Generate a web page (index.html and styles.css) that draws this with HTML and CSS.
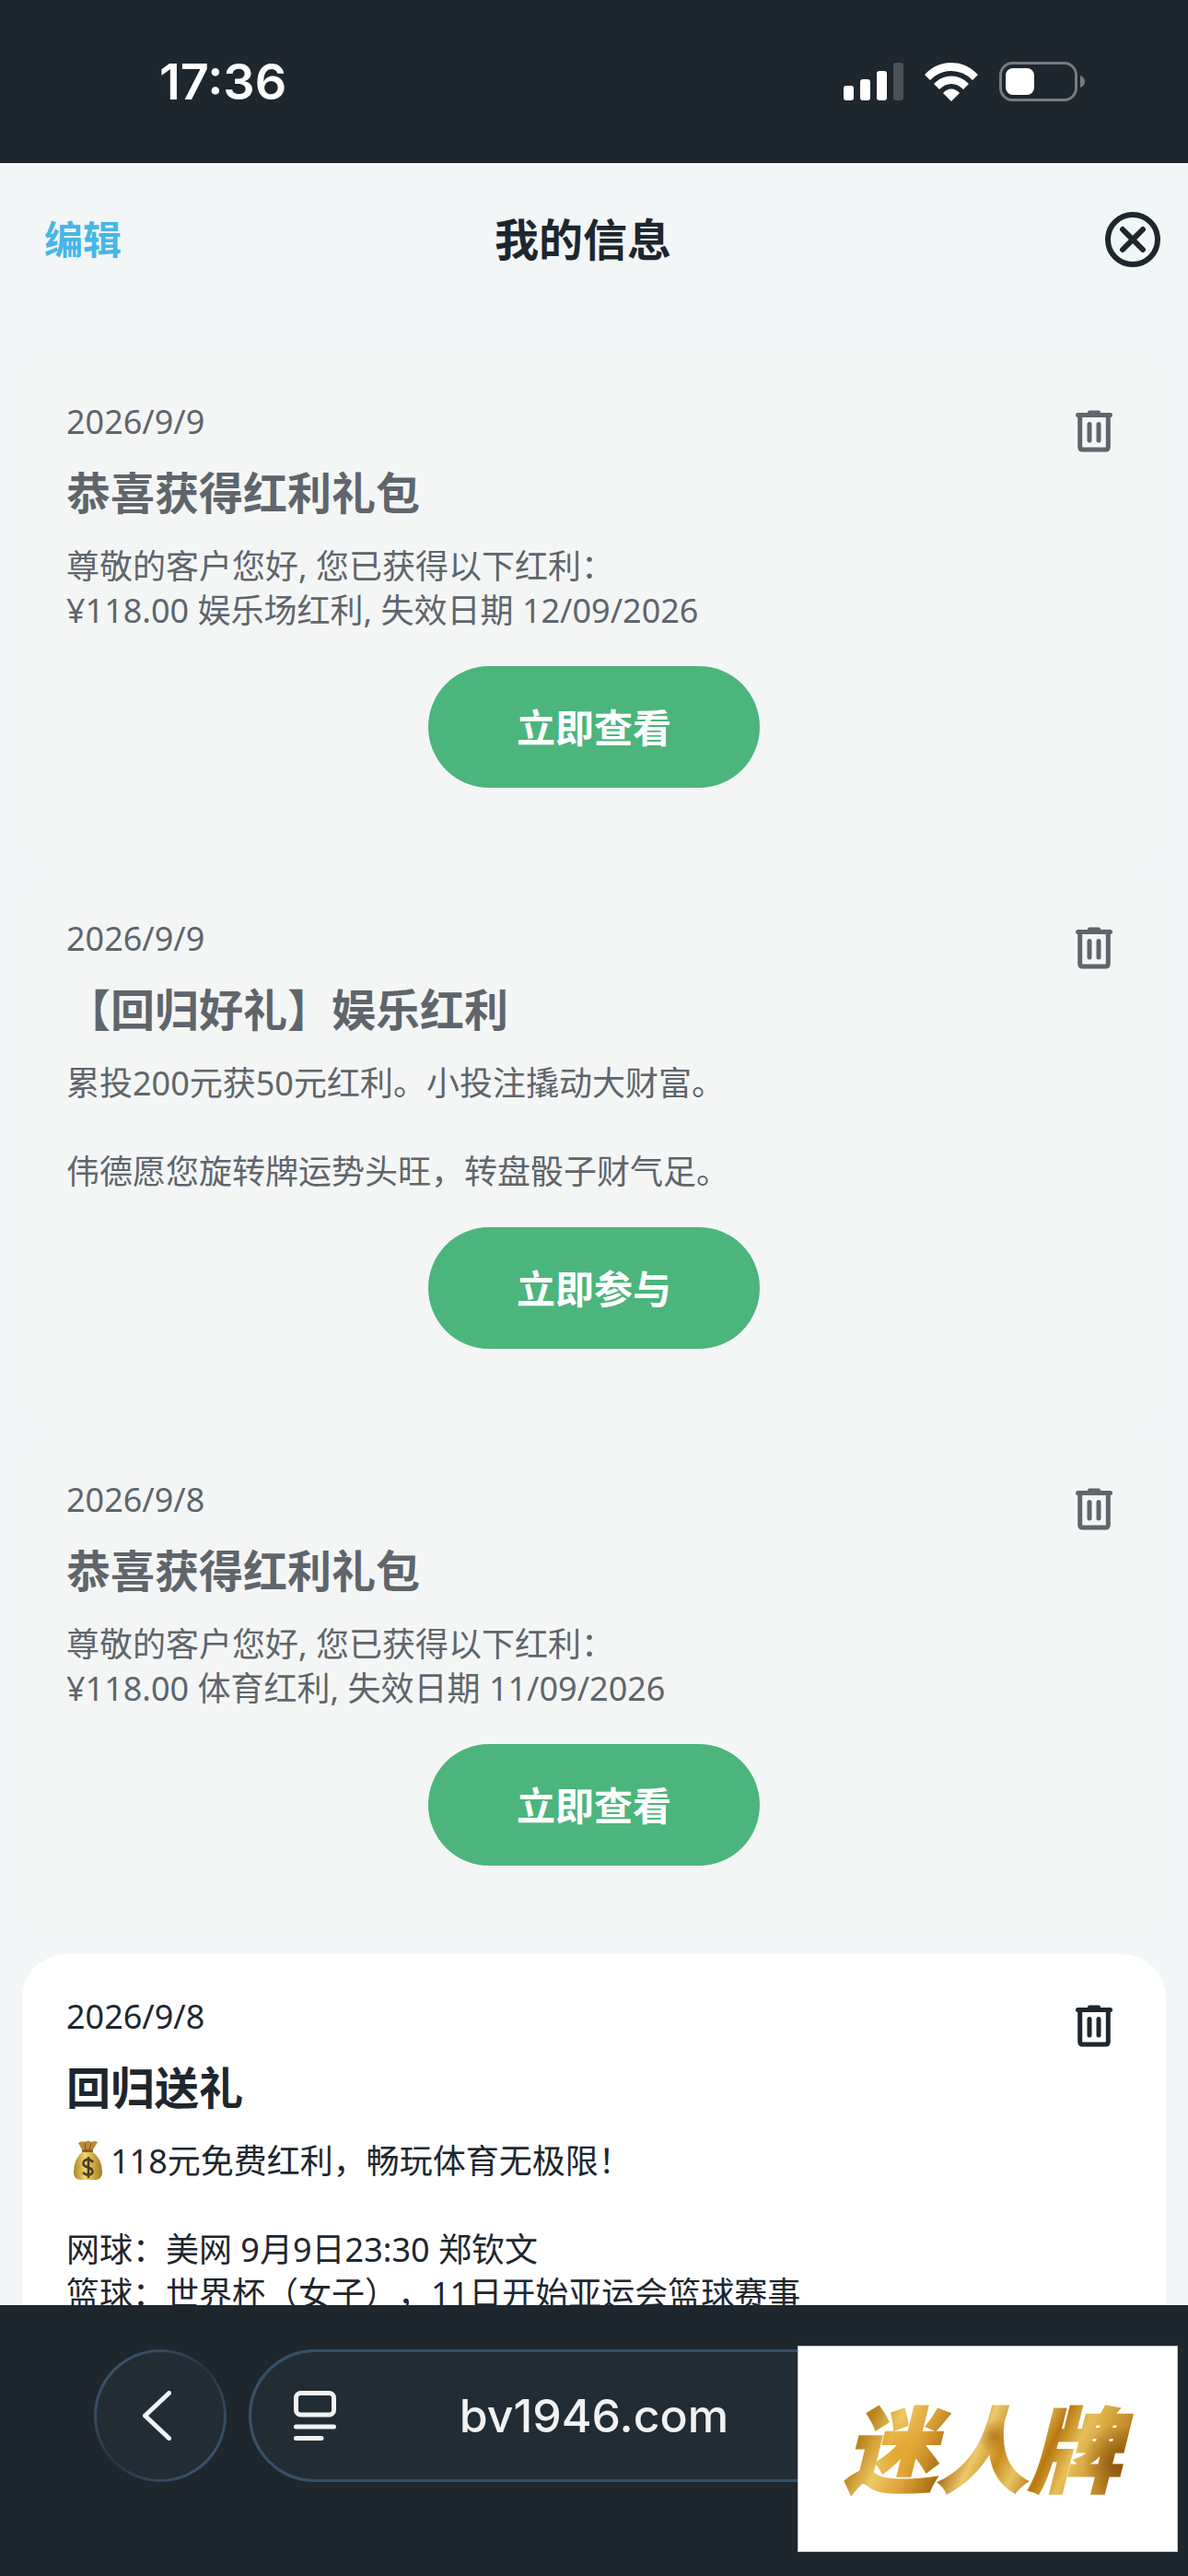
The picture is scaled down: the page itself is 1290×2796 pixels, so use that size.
FILE: index.html
```html
<!DOCTYPE html>
<html lang="zh-CN">
<head>
  <meta charset="UTF-8" />
  <meta name="viewport" content="width=device-width, initial-scale=1.0" />
  <title>我的信息</title>
  <link rel="stylesheet" href="styles.css">
</head>
<body>
  <svg class="sprite" aria-hidden="true">
    <symbol id="icon-trash" viewBox="0 0 40 46">
      <path d="M13 2.500 Q13 0.500 15 0.500 H25 Q27 0.500 27 2.500 V4 H13 Z" fill="currentColor"/>
      <path d="M2.500 5.500 H37.500" fill="none" stroke="currentColor" stroke-width="5" stroke-linecap="round"/>
      <path d="M4.700 6 V40 Q4.700 43 7.700 43 H32.300 Q35.300 43 35.300 40 V6" fill="none" stroke="currentColor" stroke-width="5"/>
      <path d="M15 15.500 V33 M25 15.500 V33" fill="none" stroke="currentColor" stroke-width="5" stroke-linecap="round"/>
    </symbol>
  </svg>

  <div class="status-bar">
    <span class="time">17:36</span>
    <div class="status-icons">
      <svg width="65" height="42" viewBox="0 0 65 42">
        <g fill="#fff">
          <rect x="0" y="25" width="11" height="16" rx="3"/>
          <rect x="18" y="18" width="11" height="23" rx="3"/>
          <rect x="36" y="9" width="11" height="32" rx="3"/>
          <rect x="54" y="0" width="11" height="41" rx="3" opacity="0.2"/>
        </g>
      </svg>
      <svg width="58" height="42" viewBox="0 0 58 42">
        <g fill="#fff">
          <path d="M0 13 Q12 0 29 0 Q46 0 58 13 L52 19 Q42 9 29 9 Q16 9 6 19 Z"/>
          <path d="M10 23 Q18 14.500 29 14.500 Q40 14.500 48 23 L42 29 Q36 23 29 23 Q22 23 16 29 Z"/>
          <path d="M20 33 Q24 28.500 29 28.500 Q34 28.500 38 33 L29 42 Z"/>
        </g>
      </svg>
      <svg width="94" height="44" viewBox="0 0 94 44">
        <rect x="1.500" y="1.500" width="82" height="40" rx="13" fill="none" stroke="#787c82" stroke-width="3"/>
        <path d="M88 15 Q93 17 93 21.500 Q93 26 88 28 Z" fill="#787c82"/>
        <rect x="7" y="7" width="31" height="29" rx="8" fill="#fff"/>
      </svg>
    </div>
  </div>

  <main class="page">
    <header class="page-header">
      <button class="edit-btn">编辑</button>
      <h1>我的信息</h1>
      <button class="close-btn" aria-label="关闭">
        <svg width="60" height="60" viewBox="0 0 60 60" fill="none" stroke="currentColor">
          <circle cx="30" cy="30" r="27" stroke-width="6"/>
          <path d="M19 19 L41 41 M41 19 L19 41" stroke-width="6" stroke-linecap="round"/>
        </svg>
      </button>
    </header>

    <section class="messages">
      <article class="card read">
        <button class="delete-btn" aria-label="删除"><svg width="40" height="46"><use href="#icon-trash"/></svg></button>
        <time class="date">2026/9/9</time>
        <h2>恭喜获得红利礼包</h2>
        <p>尊敬的客户您好, 您已获得以下红利：<br>¥118.00 娱乐场红利, 失效日期 12/09/2026</p>
        <button class="action-btn">立即查看</button>
      </article>

      <article class="card read">
        <button class="delete-btn" aria-label="删除"><svg width="40" height="46"><use href="#icon-trash"/></svg></button>
        <time class="date">2026/9/9</time>
        <h2>【回归好礼】娱乐红利</h2>
        <p>累投200元获50元红利。小投注撬动大财富。<br><br>伟德愿您旋转牌运势头旺，转盘骰子财气足。</p>
        <button class="action-btn">立即参与</button>
      </article>

      <article class="card read">
        <button class="delete-btn" aria-label="删除"><svg width="40" height="46"><use href="#icon-trash"/></svg></button>
        <time class="date">2026/9/8</time>
        <h2>恭喜获得红利礼包</h2>
        <p>尊敬的客户您好, 您已获得以下红利：<br>¥118.00 体育红利, 失效日期 11/09/2026</p>
        <button class="action-btn">立即查看</button>
      </article>

      <article class="card">
        <button class="delete-btn" aria-label="删除"><svg width="40" height="46"><use href="#icon-trash"/></svg></button>
        <time class="date">2026/9/8</time>
        <h2>回归送礼</h2>
        <p><svg class="money-bag" width="48" height="44" viewBox="0 0 48 44" role="img" aria-label="钱袋">
          <defs>
            <linearGradient id="bag" x1="0" x2="1">
              <stop offset="0" stop-color="#a8842a"/>
              <stop offset="0.400" stop-color="#f2d568"/>
              <stop offset="1" stop-color="#a57c22"/>
            </linearGradient>
          </defs>
          <path d="M18 12 L13 3 Q17 0 20 2 Q24 -1 27 2 Q31 0 34 2 L28 12 Z" fill="#b98b3c"/>
          <path d="M20 3 L21 10 M27 3 L25 10" stroke="#7d5720" stroke-width="1"/>
          <path d="M18 12 Q8 20 8 35 Q8 42 15 43 H32 Q39 42 39 35 Q39 20 28 12 Z" fill="url(#bag)"/>
          <rect x="17" y="10" width="12" height="3" rx="1" fill="#8c5d22"/>
          <path d="M29 24 Q26 20 22 21 Q17 23 19 27 Q21 29 25 30 Q30 32 28 36 Q23 40 18 35 M24 18 V41" fill="none" stroke="#4a3c26" stroke-width="2.500"/>
        </svg>118元免费红利，畅玩体育无极限！<br><br>网球：美网 9月9日23:30 郑钦文<br>篮球：世界杯（女子），11日开始亚运会篮球赛事</p>
      </article>
    </section>
  </main>

  <nav class="browser-bar">
    <button class="back-btn" aria-label="返回">
      <svg width="31" height="54" viewBox="0 0 31 54"><path d="M28.500 2.500 L2.500 27 L28.500 51.500" fill="none" stroke="#f1f6fb" stroke-width="5" stroke-linecap="round" stroke-linejoin="round"/></svg>
    </button>
    <button class="address">
      <svg width="46" height="54" viewBox="0 0 46 54" fill="none" stroke="#f2f2f2" stroke-width="5" stroke-linecap="round">
        <rect x="2.500" y="2.500" width="41" height="23.500" rx="5"/>
        <path d="M2.500 39 H43.500 M2.500 51.500 H30"/>
      </svg>
      <span>bv1946.com</span>
    </button>
  </nav>

  <div class="watermark"><span>迷人牌</span></div>
</body>
</html>
```

FILE: styles.css
```css
:root {
  --dark: #1e262e;
  --page-bg: #f2f6f7;
  --read-bg: #f4f6f6;
  --read-text: #5f656b;
  --link: #46b6e6;
  --green: #4bb57c;
}
* {
  box-sizing: border-box;
}
body {
  margin: 0;
  height: 100vh;
  display: flex;
  flex-direction: column;
  overflow: hidden;
  background: var(--dark);
  color: var(--dark);
  font-family: "Noto Sans", "Noto Sans CJK SC", sans-serif;
  font-size: 36px;
  line-height: 48px;
  text-spacing-trim: space-all;
}
button {
  border: none;
  padding: 0;
  background: none;
  color: inherit;
  font-family: inherit;
  cursor: pointer;
}
svg {
  display: block;
}
.sprite {
  display: none;
}

/* status bar */
.status-bar {
  flex: none;
  height: 177px;
  padding: 0 111px 0 173px;
  display: flex;
  align-items: center;
  justify-content: space-between;
  color: #fff;
}
.time {
  font-family: Inter, sans-serif;
  font-size: 54px;
  font-weight: 600;
}
.status-icons {
  display: flex;
  align-items: center;
  gap: 23px;
}

/* page */
.page {
  flex: 1;
  min-height: 0;
  overflow: hidden;
  background: var(--page-bg);
}
.page-header {
  display: grid;
  grid-template-columns: 1fr auto 1fr;
  align-items: center;
  height: 165px;
  padding: 0 30px 0 6px;
}
.page-header h1 {
  margin: 0;
  font-size: 48px;
  font-weight: 600;
}
.edit-btn {
  justify-self: start;
  margin-left: 42px;
  padding-bottom: 4px;
  color: var(--link);
  font-size: 42px;
  font-weight: 600;
}
.close-btn {
  justify-self: end;
}
.messages {
  padding: 48px 24px;
  display: flex;
  flex-direction: column;
  gap: 24px;
}
.card {
  display: flow-root;
  padding: 44px 48px 72px;
  border-radius: 48px;
  background: #fff;
}
.card.read {
  background: var(--read-bg);
  color: var(--read-text);
}
.delete-btn {
  float: right;
  margin: 11px 10px 0 0;
}
.date {
  display: block;
}
.card h2 {
  margin: 23px 0 26px;
  font-size: 48px;
  font-weight: 600;
  line-height: 60px;
}
.card p {
  margin: 0;
}
.action-btn {
  display: block;
  width: 360px;
  height: 132px;
  margin: 36px auto 0;
  padding-bottom: 4px;
  border-radius: 66px;
  background: var(--green);
  color: #fff;
  font-size: 42px;
  font-weight: 600;
}
.money-bag {
  display: inline-block;
  vertical-align: -8px;
}

/* browser bar */
.browser-bar {
  flex: none;
  height: 294px;
  padding: 48px 270px 0 102px;
  display: flex;
  align-items: flex-start;
  gap: 24px;
}
.back-btn,
.address {
  height: 144px;
  border: 3px solid transparent;
  border-radius: 72px;
  background:
    linear-gradient(#222c35, #222c35) padding-box,
    linear-gradient(135deg, #41607f, #263440 50%, #41607f) border-box;
}
.back-btn {
  width: 144px;
  padding-right: 8px;
  display: flex;
  align-items: center;
  justify-content: center;
}
.address {
  flex: 1;
  display: grid;
  grid-template-columns: 1fr auto 1fr;
  align-items: center;
  padding: 0 46px;
  border-color: #374f69;
  color: #f2f2f2;
  font-family: Inter, sans-serif;
  font-size: 50px;
  font-weight: 500;
}

/* brand image pinned over the bar */
.watermark {
  position: fixed;
  right: 11px;
  bottom: 26px;
  width: 413px;
  height: 224px;
  display: flex;
  align-items: center;
  justify-content: center;
  border: 1px solid #c4c4c4;
  background: #fff;
}
.watermark span {
  padding: 0 24px 0 12px;
  background:
    radial-gradient(circle at 20% 50%, #e29a1caa, transparent 12%),
    radial-gradient(circle at 52% 40%, #a9670faa, transparent 10%),
    radial-gradient(circle at 92% 60%, #7d4d08cc, transparent 12%),
    linear-gradient(115deg, #a87210, #b9831c 14%, #edc863 22%, #e0a63a 30%, #a86c10 40%, #edc96c 47%, #c98a1c 54%, #e8c468 60%, #b9780f 67%, #e6bf58 74%, #c98f2c 84%, #8d5a0c 93%, #b98224);
  -webkit-background-clip: text;
  background-clip: text;
  -webkit-text-stroke: 2px transparent;
  color: transparent;
  font-size: 100px;
  font-weight: 900;
  font-style: italic;
  line-height: 130px;
}
```
